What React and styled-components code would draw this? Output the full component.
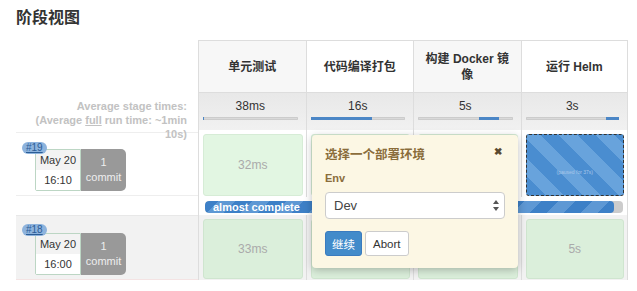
import React from 'react';
import styled, { createGlobalStyle } from 'styled-components';

const GlobalStyle = createGlobalStyle`
  body {
    margin: 0;
    background: #fff;
    font-family: 'Liberation Sans', 'Noto Sans CJK SC', Arial, sans-serif;
    color: #333;
  }
`;

const Page = styled.div`
  padding: 8px 0 0 16px;
  width: 637px;
  height: 291px;
  box-sizing: border-box;
  overflow: hidden;
`;

const Title = styled.h1`
  margin: 0 0 12px;
  font-size: 16px;
  line-height: 20px;
  font-weight: 700;
  color: #333;
`;

const Grid = styled.div`
  position: relative;
  display: grid;
  grid-template-columns: 182px repeat(4, 107.5px);
  grid-template-rows: 52px 38px 67px 18px 65px;
`;

const Blank = styled.div``;

const StageHead = styled.div`
  display: flex;
  align-items: center;
  justify-content: center;
  text-align: center;
  padding: 0 10px;
  font-size: 12px;
  font-weight: 700;
  line-height: 16px;
  color: #333;
  background: ${({ $shade }) => ($shade ? '#f7f7f7' : '#fff')};
  border-top: 1px solid #ddd;
  border-left: 1px solid #ddd;
  ${({ $last }) => ($last ? 'border-right: 1px solid #ddd;' : '')}
`;

const AvgLabel = styled.div`
  position: relative;
  z-index: 1;
  text-align: right;
  padding: 7px 11px 0 0;
  font-size: 11px;
  line-height: 14px;
  font-weight: 700;
  color: #c2c2c2;
  height: 52px;
  u {
    text-decoration: underline;
  }
`;

const AvgCell = styled.div`
  display: flex;
  flex-direction: column;
  align-items: center;
  padding: 6px 8px 0 4px;
  background: linear-gradient(#e8e8e8, #f1f1f1);
  border-left: 1px solid #ddd;
  border-top: 1px solid #ddd;
  ${({ $last }) => ($last ? 'border-right: 1px solid #ddd;' : '')}
  font-size: 12px;
  color: #333;
`;

const AvgBar = styled.div`
  position: relative;
  margin-top: 4px;
  width: 100%;
  height: 3px;
  background: #d9d9d9;
  border-radius: 1px;
  box-shadow: inset 0 0 0 1px #ccc;
`;

const AvgFill = styled.div`
  position: absolute;
  top: 0;
  bottom: 0;
  background: #4b86c6;
`;

const BuildCell = styled.div`
  position: relative;
  display: flex;
  align-items: flex-start;
  padding: ${({ $alt }) => ($alt ? '17px' : '16px')} 0 0 19px;
  background: ${({ $alt }) => ($alt ? '#f2f2f2' : '#fff')};
  border-top: 1px solid ${({ $alt }) => ($alt ? '#e8e8e8' : '#eee')};
  border-bottom: 1px solid ${({ $alt }) => ($alt ? '#f4e3e3' : '#eee')};
  margin-top: ${({ $alt }) => ($alt ? '0' : '2px')};
  margin-bottom: ${({ $alt }) => ($alt ? '0' : '1px')};
`;

const Badge = styled.a`
  position: absolute;
  top: ${({ $alt }) => ($alt ? '8px' : '9px')};
  left: 6px;
  z-index: 1;
  padding: 0 4px;
  height: 12px;
  line-height: 12px;
  border-radius: 7px;
  background: #8db3dd;
  color: #2b5d96;
  font-size: 10px;
  text-decoration: underline;
`;

const DateBox = styled.div`
  width: 44px;
  border: 1px solid #bcd6c4;
  border-radius: 2px 0 0 2px;
  font-size: 11px;
  text-align: center;
  color: #333;
  span {
    display: block;
    height: 20px;
    line-height: 20px;
  }
  span:first-child {
    background: #f3f3f3;
  }
  span:last-child {
    background: #fff;
  }
`;

const CommitBox = styled.div`
  width: 45px;
  height: 42px;
  background: #999;
  border-radius: 0 5px 5px 0;
  color: #eee;
  font-size: 11px;
  line-height: 15px;
  display: flex;
  flex-direction: column;
  justify-content: center;
  align-items: center;
`;

const StageCell = styled.div`
  padding: 4px 3px 1px 4px;
  border-left: 1px solid #ddd;
  ${({ $last }) => ($last ? 'border-right: 1px solid #ddd;' : '')}
  background: ${({ $alt }) => ($alt ? '#f2f2f2' : '#fff')};
  display: flex;
`;

const Result = styled.div`
  flex: 1;
  display: flex;
  align-items: center;
  justify-content: center;
  border-radius: 3px;
  border: 1px solid ${({ $alt }) => ($alt ? '#cfe5cf' : '#d6ecd6')};
  background: ${({ $alt }) => ($alt ? '#dbefdb' : '#e2f6e2')};
  color: #aaa;
  font-size: 12px;
`;

const Paused = styled.div`
  flex: 1;
  display: flex;
  align-items: center;
  justify-content: center;
  border-radius: 3px;
  border: 1px dashed #333;
  background: repeating-linear-gradient(
    45deg,
    #4a8dd0 0 13px,
    #68a3dc 13px 26px
  );
  color: #a9c8ea;
  font-size: 5px;
  padding-top: 14px;
`;

const ProgressRow = styled.div`
  grid-column: 2 / 6;
  padding: 4px 4px 2px 6px;
  border-left: 1px solid #ddd;
  border-right: 1px solid #ddd;
`;

const Progress = styled.div`
  height: 12px;
  border-radius: 4px;
  background: #ccc;
  overflow: hidden;
`;

const ProgressFill = styled.div`
  height: 100%;
  border-radius: 4px;
  background: repeating-linear-gradient(
    -45deg,
    #3d80c7 0 12px,
    #5e98d4 12px 24px
  );
  color: #fff;
  font-size: 11px;
  font-weight: 700;
  line-height: 12px;
  padding-left: 8px;
  box-sizing: border-box;
`;

const Popup = styled.div`
  position: absolute;
  left: 296px;
  top: 95px;
  width: 206px;
  height: 133px;
  box-sizing: border-box;
  padding: 12px 13px;
  background: #fcf7e4;
  border-radius: 4px;
  box-shadow: 0 2px 8px rgba(0, 0, 0, 0.25);
  z-index: 5;
  color: #8a6d3b;
`;

const PopupHead = styled.div`
  display: flex;
  justify-content: space-between;
  align-items: flex-start;
  font-size: 12.5px;
  font-weight: 700;
  line-height: 16px;
`;

const Close = styled.span`
  font-size: 10px;
  line-height: 10px;
  margin: 0 3px 0 0;
  color: #5a4a30;
`;

const Label = styled.div`
  margin-top: 8px;
  font-size: 11px;
  font-weight: 700;
  line-height: 14px;
`;

const Select = styled.div`
  margin-top: 7px;
  height: 27px;
  box-sizing: border-box;
  display: flex;
  align-items: center;
  justify-content: space-between;
  padding: 0 5px 0 8px;
  background: #fff;
  border: 1px solid #ccc;
  border-radius: 4px;
  color: #444;
  font-size: 13px;
`;

const Buttons = styled.div`
  display: flex;
  gap: 3px;
  margin-top: 12px;
`;

const Button = styled.button`
  height: 25px;
  padding: 0 ${({ $primary }) => ($primary ? '6px' : '7px')};
  border-radius: 3px;
  font-family: inherit;
  font-size: 11.5px;
  border: 1px solid ${({ $primary }) => ($primary ? '#3a7bbf' : '#ccc')};
  background: ${({ $primary }) => ($primary ? '#428bca' : '#fff')};
  color: ${({ $primary }) => ($primary ? '#fff' : '#333')};
`;

const stages = [
  { name: '单元测试', avg: '38ms', from: 0, to: 1 },
  { name: '代码编译打包', avg: '16s', from: 0, to: 65 },
  { name: '构建 Docker 镜像', avg: '5s', from: 65, to: 86 },
  { name: '运行 Helm', avg: '3s', from: 86, to: 100 },
];

const Build = ({ id, time, alt }) => (
  <BuildCell $alt={alt}>
    <Badge $alt={alt}>{id}</Badge>
    <DateBox>
      <span>May 20</span>
      <span>{time}</span>
    </DateBox>
    <CommitBox>
      <span>1</span>
      <span>commit</span>
    </CommitBox>
  </BuildCell>
);

const SelectArrows = () => (
  <svg width="6" height="11" viewBox="0 0 6 11">
    <path d="M3 0 L6 4 L0 4 Z M3 11 L6 7 L0 7 Z" fill="#555" />
  </svg>
);

export default function App() {
  return (
    <Page>
      <GlobalStyle />
      <Title>阶段视图</Title>
      <Grid>
        <Blank />
        {stages.map((s, i) => (
          <StageHead key={s.name} $shade={i % 2 === 0} $last={i === 3}>
            {s.name}
          </StageHead>
        ))}

        <AvgLabel>
          Average stage times:
          <br />
          (Average <u>full</u> run time: ~1min
          <br />
          10s)
        </AvgLabel>
        {stages.map((s, i) => (
          <AvgCell key={s.name} $last={i === 3}>
            {s.avg}
            <AvgBar>
              <AvgFill style={{ left: `${s.from}%`, width: `${s.to - s.from}%` }} />
            </AvgBar>
          </AvgCell>
        ))}

        <Build id="#19" time="16:10" />
        <StageCell>
          <Result>32ms</Result>
        </StageCell>
        <StageCell>
          <Result>&nbsp;</Result>
        </StageCell>
        <StageCell>
          <Result>&nbsp;</Result>
        </StageCell>
        <StageCell $last>
          <Paused>(paused for 37s)</Paused>
        </StageCell>

        <Blank />
        <ProgressRow>
          <Progress>
            <ProgressFill style={{ width: '97.8%' }}>almost complete</ProgressFill>
          </Progress>
        </ProgressRow>

        <Build id="#18" time="16:00" alt />
        <StageCell $alt>
          <Result $alt>33ms</Result>
        </StageCell>
        <StageCell $alt>
          <Result $alt>&nbsp;</Result>
        </StageCell>
        <StageCell $alt>
          <Result $alt>&nbsp;</Result>
        </StageCell>
        <StageCell $alt $last>
          <Result $alt>5s</Result>
        </StageCell>

        <Popup>
          <PopupHead>
            选择一个部署环境
            <Close>✖</Close>
          </PopupHead>
          <Label>Env</Label>
          <Select>
            Dev
            <SelectArrows />
          </Select>
          <Buttons>
            <Button $primary>继续</Button>
            <Button>Abort</Button>
          </Buttons>
        </Popup>
      </Grid>
    </Page>
  );
}
